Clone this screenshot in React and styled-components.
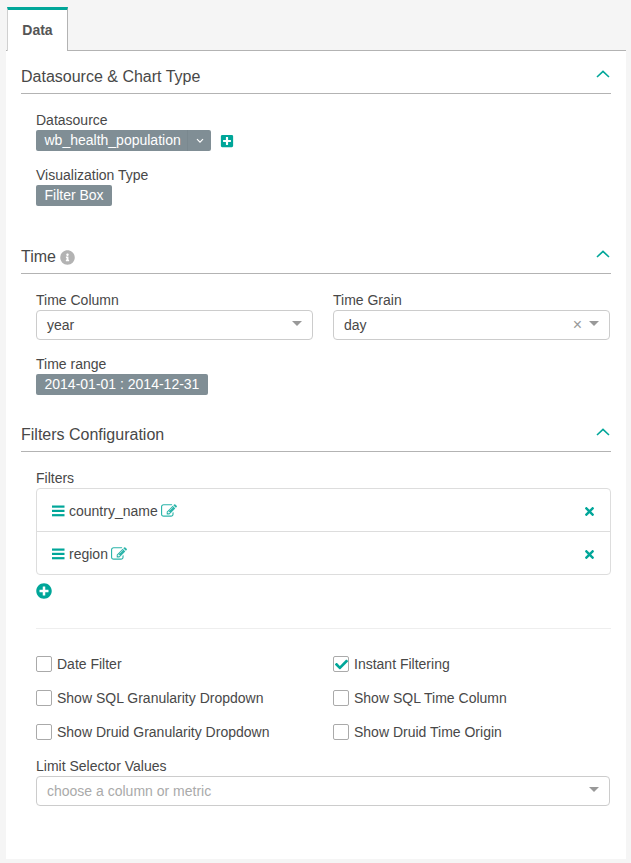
import React from 'react';
import styled, { createGlobalStyle } from 'styled-components';
import { FaPlusSquare, FaInfoCircle, FaTimes, FaPlusCircle, FaCheck } from 'react-icons/fa';

const GlobalStyle = createGlobalStyle`
  html, body {
    margin: 0;
    padding: 0;
    background: #f5f5f5;
  }
  body {
    font-family: "Liberation Sans", Arial, sans-serif;
    font-size: 14px;
    color: #484848;
  }
`;

const Chevron = () => (
  <ChevronIcon viewBox="0 0 14 8" fill="none" stroke="#00a699" strokeWidth="1.6">
    <path d="M1 7 L7 1.4 L13 7" />
  </ChevronIcon>
);

const Caret = () => <CaretShape />;

const Bars = () => (
  <svg width="13" height="12" viewBox="0 0 13 12" fill="currentColor">
    <rect x="0" y="0.5" width="12.5" height="2.2" />
    <rect x="0" y="4.8" width="12.5" height="2.2" />
    <rect x="0" y="9.1" width="12.5" height="2.2" />
  </svg>
);

const PencilSquare = () => (
  <svg width="16" height="16" viewBox="0 0 1792 1792" fill="currentColor">
    <path d="M888 1184l116-116-152-152-116 116v56h96v96h56zm440-720q-16-16-33 1l-350 350q-17 17-1 33t33-1l350-350q17-17 1-33zm80 594v190q0 119-84.5 203.5t-203.5 84.5h-832q-119 0-203.5-84.5t-84.5-203.5v-832q0-119 84.5-203.5t203.5-84.5h832q63 0 117 25 15 7 18 23 3 17-9 29l-49 49q-14 14-32 8-23-6-45-6h-832q-66 0-113 47t-47 113v832q0 66 47 113t113 47h832q66 0 113-47t47-113v-126q0-13 9-22l64-64q15-15 35-7t20 29zm-96-738l288 288-672 672h-288v-288zm444 132l-92 92-288-288 92-92q28-28 68-28t68 28l152 152q28 28 28 68t-28 68z" />
  </svg>
);

const Section = ({ title, info, $extra, children }) => (
  <SectionBox $extra={$extra}>
    <SectionHeader>
      <SectionTitle>
        {title}
        {info && <InfoIcon><FaInfoCircle /></InfoIcon>}
      </SectionTitle>
      <Chevron />
    </SectionHeader>
    <SectionBody>{children}</SectionBody>
  </SectionBox>
);

const Check = ({ label, checked }) => (
  <CheckRow>
    <CheckBox>{checked && <FaCheck />}</CheckBox>
    <span>{label}</span>
  </CheckRow>
);

const FilterItem = ({ name }) => (
  <FilterRow>
    <BarsIcon><Bars /></BarsIcon>
    <FilterName>{name}</FilterName>
    <EditIcon><PencilSquare /></EditIcon>
    <RemoveIcon><FaTimes /></RemoveIcon>
  </FilterRow>
);

export default function App() {
  return (
    <Page>
      <GlobalStyle />
      <Panel>
        <TabBar>
          <Tab>Data</Tab>
        </TabBar>
        <Content>
          <Section title="Datasource & Chart Type" $extra>
            <Field>
              <Label>Datasource</Label>
              <DatasourceRow>
                <DropBadge>
                  <DropText>wb_health_population</DropText>
                  <DropCaret>
                    <svg width="8" height="6" viewBox="0 0 8 6" fill="none" stroke="#fff" strokeWidth="1.2">
                      <path d="M1 1.2 L4 4.2 L7 1.2" />
                    </svg>
                  </DropCaret>
                </DropBadge>
                <AddSquare><FaPlusSquare /></AddSquare>
              </DatasourceRow>
            </Field>
            <Field>
              <Label>Visualization Type</Label>
              <Badge>Filter Box</Badge>
            </Field>
          </Section>

          <Section title="Time" info>
            <TwoCols>
              <Field>
                <Label>Time Column</Label>
                <Select>
                  <SelectValue>year</SelectValue>
                  <Caret />
                </Select>
              </Field>
              <Field>
                <Label>Time Grain</Label>
                <Select>
                  <SelectValue>day</SelectValue>
                  <ClearX>×</ClearX>
                  <Caret />
                </Select>
              </Field>
            </TwoCols>
            <Field>
              <Label>Time range</Label>
              <Badge>2014-01-01 : 2014-12-31</Badge>
            </Field>
          </Section>

          <Section title="Filters Configuration">
            <Label>Filters</Label>
            <FilterList>
              <FilterItem name="country_name" />
              <FilterItem name="region" />
            </FilterList>
            <AddCircle><FaPlusCircle /></AddCircle>
            <Divider />
            <CheckGrid>
              <Check label="Date Filter" />
              <Check label="Instant Filtering" checked />
              <Check label="Show SQL Granularity Dropdown" />
              <Check label="Show SQL Time Column" />
              <Check label="Show Druid Granularity Dropdown" />
              <Check label="Show Druid Time Origin" />
            </CheckGrid>
            <Label>Limit Selector Values</Label>
            <Select $width="574px">
              <Placeholder>choose a column or metric</Placeholder>
              <Caret />
            </Select>
          </Section>
        </Content>
      </Panel>
    </Page>
  );
}

const Page = styled.div`
  width: 631px;
  height: 863px;
  padding-left: 6px;
  box-sizing: border-box;
  overflow: hidden;
`;

const Panel = styled.div`
  width: 620px;
  height: 859px;
  background: #fff;
`;

const TabBar = styled.div`
  height: 51px;
  box-sizing: border-box;
  background: #f5f5f5;
  border-bottom: 1px solid #b3b3b3;
  padding: 7px 0 0 1px;
  display: flex;
`;

const Tab = styled.div`
  width: 61px;
  height: 44px;
  box-sizing: border-box;
  background: #fff;
  border-top: 3px solid #00a699;
  border-right: 1px solid #b3b3b3;
  border-left: 1px solid #d0d0d0;
  font-weight: 700;
  font-size: 14px;
  color: #555;
  text-align: center;
  line-height: 41px;
`;

const Content = styled.div`
  padding: 0 15px;
`;

const SectionBox = styled.section`
  width: 590px;
  margin-bottom: ${(p) => (p.$extra ? '25px' : '0')};
`;

const SectionHeader = styled.div`
  height: 43px;
  box-sizing: border-box;
  border-bottom: 1px solid #b3b3b3;
  padding: 15px 1px 0 0;
  display: flex;
  justify-content: space-between;
  align-items: flex-start;
`;

const SectionTitle = styled.div`
  font-size: 16px;
  line-height: 22px;
  color: #484848;
  display: flex;
  align-items: center;
`;

const InfoIcon = styled.span`
  display: inline-flex;
  margin-left: 4px;
  color: #b3b3b3;
  font-size: 15px;
`;

const ChevronIcon = styled.svg`
  width: 14px;
  height: 8px;
  margin-top: 4px;
`;

const SectionBody = styled.div`
  padding: 16px 0 0 15px;
`;

const Field = styled.div`
  margin-bottom: 14px;
`;

const Label = styled.div`
  font-size: 14px;
  line-height: 20px;
  color: #484848;
`;

const DatasourceRow = styled.div`
  display: flex;
  align-items: center;
`;

const Badge = styled.div`
  display: inline-block;
  height: 21px;
  box-sizing: border-box;
  padding: 0 8.5px;
  background: #808e95;
  border-radius: 2px;
  color: #fff;
  font-size: 14px;
  line-height: 20px;
  vertical-align: top;
`;

const DropBadge = styled(Badge)`
  display: flex;
  width: 175px;
  padding: 0;
`;

const DropText = styled.span`
  flex: 1;
  padding-left: 8.5px;
`;

const DropCaret = styled.span`
  width: 24px;
  display: flex;
  align-items: center;
  justify-content: center;
  border-left: 1px solid #7a888f;
  box-sizing: border-box;
`;

const AddSquare = styled.span`
  display: inline-flex;
  margin-left: 9px;
  color: #00a699;
  font-size: 14px;
`;

const TwoCols = styled.div`
  display: grid;
  grid-template-columns: 277px 277px;
  column-gap: 20px;
`;

const Select = styled.div`
  height: 30px;
  box-sizing: border-box;
  border: 1px solid #ccc;
  border-radius: 4px;
  background: #fff;
  display: flex;
  align-items: center;
  padding: 0 10px;
  width: ${(p) => p.$width || 'auto'};
`;

const SelectValue = styled.span`
  flex: 1;
  font-size: 14px;
  color: #484848;
`;

const Placeholder = styled(SelectValue)`
  color: #aaa;
`;

const ClearX = styled.span`
  color: #999;
  font-size: 16px;
  line-height: 16px;
  margin-right: 7px;
`;

const CaretShape = styled.span`
  width: 0;
  height: 0;
  border-style: solid;
  border-width: 5px 5px 0;
  border-color: #999 transparent transparent;
  margin-top: -3px;
`;

const FilterList = styled.div`
  height: 87px;
  box-sizing: border-box;
  width: 575px;
  border: 1px solid #ddd;
  border-radius: 4px;
  display: flex;
  flex-direction: column;
`;

const FilterRow = styled.div`
  flex: 1;
  display: flex;
  align-items: center;
  padding: 2px 15px 0;
  font-size: 14px;
  & + & {
    border-top: 1px solid #ddd;
  }
`;

const BarsIcon = styled.span`
  display: inline-flex;
  color: #00a699;
  margin-right: 4px;
`;

const FilterName = styled.span`
  color: #484848;
`;

const EditIcon = styled.span`
  display: inline-flex;
  color: #2cb5aa;
  margin-left: 3px;
  margin-top: -1px;
`;

const RemoveIcon = styled.span`
  display: inline-flex;
  color: #00a699;
  font-size: 13px;
  margin-left: auto;
  margin-right: -1px;
`;

const AddCircle = styled.div`
  display: flex;
  color: #00a699;
  font-size: 16px;
  margin-top: 8px;
`;

const Divider = styled.div`
  height: 1px;
  background: #eee;
  margin-top: 29px;
  width: 575px;
`;

const CheckGrid = styled.div`
  display: grid;
  grid-template-columns: 297px 278px;
  grid-auto-rows: 34px;
  margin-top: 18px;
  margin-bottom: 7px;
`;

const CheckRow = styled.div`
  display: flex;
  align-items: center;
  height: 34px;
  font-size: 14px;
  color: #484848;
`;

const CheckBox = styled.span`
  width: 16px;
  height: 16px;
  box-sizing: border-box;
  border: 1px solid #aaa;
  border-radius: 2px;
  margin-right: 5px;
  color: #00a699;
  font-size: 13px;
  display: inline-flex;
  align-items: center;
  justify-content: center;
`;
